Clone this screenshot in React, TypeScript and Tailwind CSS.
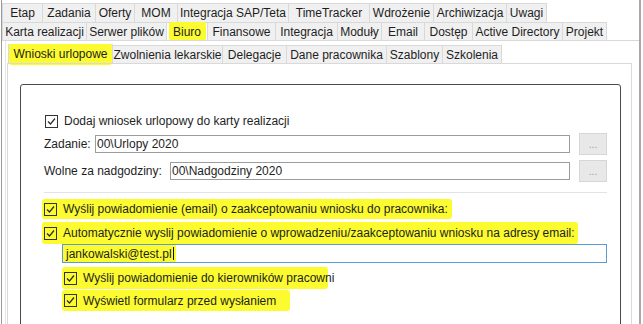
import React from "react";

const row1 = [
  { label: "Etap", w: "w-[41px]" },
  { label: "Zadania", w: "w-[53px]" },
  { label: "Oferty", w: "w-[39px]" },
  { label: "MOM", w: "w-[43px]" },
  { label: "Integracja SAP/Teta", w: "w-[111px]" },
  { label: "TimeTracker", w: "w-[81px]" },
  { label: "Wdrożenie", w: "w-[64px]" },
  { label: "Archiwizacja", w: "w-[73px]" },
  { label: "Uwagi", w: "w-[40px]" },
];

const row2 = [
  { label: "Karta realizacji", w: "w-[85px]" },
  { label: "Serwer plików", w: "w-[80px]" },
  { label: "Biuro", w: "w-[41px]", active: true },
  { label: "Finansowe", w: "w-[68px]" },
  { label: "Integracja", w: "w-[62px]" },
  { label: "Moduły", w: "w-[44px]" },
  { label: "Email", w: "w-[43px]" },
  { label: "Dostęp", w: "w-[48px]" },
  { label: "Active Directory", w: "w-[90px]" },
  { label: "Projekt", w: "w-[44px]" },
];

const subTabs = [
  { label: "Wnioski urlopowe", w: "w-[105px]", active: true },
  { label: "Zwolnienia lekarskie", w: "w-[110px]" },
  { label: "Delegacje", w: "w-[64px]" },
  { label: "Dane pracownika", w: "w-[100px]" },
  { label: "Szablony", w: "w-[56px]" },
  { label: "Szkolenia", w: "w-[59px]" },
];

function Check({ clear }: { clear?: boolean }) {
  return (
    <span
      className={`flex h-[13px] w-[13px] shrink-0 items-center justify-center border border-[#333] ${
        clear ? "bg-transparent" : "bg-white"
      }`}
    >
      <svg width="11" height="11" viewBox="0 0 11 11">
        <polyline points="2,5.5 4.5,8 9,2.5" fill="none" stroke="#2a2a2a" strokeWidth="1.2" />
      </svg>
    </span>
  );
}

function DotsButton() {
  return (
    <div className="flex h-[22px] w-[28px] items-end justify-center border border-[#d6d6d6] bg-[#e8e8e8] pb-[4px] text-[10px] leading-none text-[#9a9a9a]">
      ...
    </div>
  );
}

export default function App() {
  return (
    <div className="flex h-[324px] w-[643px] overflow-hidden whitespace-nowrap bg-white font-['Liberation_Sans',Arial,sans-serif] text-[12px] text-[#1e1e1e]">
      <div className="ml-[1px] flex h-full w-[640px] flex-col border-l border-r-2 border-l-[#9a9a9a] border-r-[#a8a8a8]">
        {/* main tab rows */}
        <div className="mt-[3px] flex h-[19px]">
          {row1.map((t, i) => (
            <div
              key={t.label}
              className={`${t.w} flex h-full items-center justify-center border-r border-t border-[#d9d9d9] bg-[#f0f0f0] ${
                i === 0 ? "border-l" : ""
              }`}
            >
              {t.label}
            </div>
          ))}
        </div>
        <div className="flex h-[18px]">
          {row2.map((t, i) => (
            <div
              key={t.label}
              className={`${t.w} flex h-full items-center justify-center border-r border-t border-[#d9d9d9] ${
                i === 0 ? "border-l" : ""
              } ${t.active ? "bg-white" : "bg-[#f0f0f0]"}`}
            >
              {t.active ? (
                <span className="flex h-[19px] w-[37px] items-center justify-center rounded-[2px] bg-[#fbfb30]">
                  {t.label}
                </span>
              ) : (
                t.label
              )}
            </div>
          ))}
        </div>

        {/* Biuro page */}
        <div className="flex flex-1 flex-col border-t border-[#d9d9d9] bg-white">
          <div className="ml-[3px] flex flex-1 flex-col border-l border-[#e6e6e6]">
            <div className="ml-[2px] mt-[3px] flex h-[19px] items-end">
              {subTabs.map((t, i) => (
                <div
                  key={t.label}
                  className={`${t.w} flex items-center justify-center border-r border-t border-[#d9d9d9] ${
                    i === 0 ? "border-l" : ""
                  } ${t.active ? "h-[19px] bg-white" : "h-[18px] bg-[#f0f0f0]"}`}
                >
                  {t.active ? (
                    <span className="flex h-[21px] w-[103px] items-center justify-center rounded-[3px] bg-[#fbfb30]">
                      {t.label}
                    </span>
                  ) : (
                    t.label
                  )}
                </div>
              ))}
            </div>

            {/* sub tab panel */}
            <div className="ml-[1px] flex w-[625px] flex-1 flex-col border border-[#d9d9d9]">
              <div className="ml-[12px] mt-[20px] flex h-[260px] w-[601px] flex-col rounded-[3px] border border-[#4a4a4a]">
                <div className="ml-[24px] mt-[28px] flex h-[16px] items-center gap-[6px]">
                  <Check />
                  <span>Dodaj wniosek urlopowy do karty realizacji</span>
                </div>

                <div className="ml-[23px] mt-[4px] flex h-[22px] items-center">
                  <span className="w-[51px]">Zadanie:</span>
                  <div className="flex h-[18px] w-[475px] items-center border border-[#9c9c9c] pl-[1px]">
                    00\Urlopy 2020
                  </div>
                  <div className="ml-[9px]">
                    <DotsButton />
                  </div>
                </div>

                <div className="ml-[23px] mt-[5px] flex h-[22px] items-center">
                  <span className="w-[126px]">Wolne za nadgodziny:</span>
                  <div className="flex h-[18px] w-[400px] items-center border border-[#9c9c9c] pl-[1px]">
                    00\Nadgodziny 2020
                  </div>
                  <div className="ml-[9px]">
                    <DotsButton />
                  </div>
                </div>

                <div className="ml-[23px] mt-[10px] h-px w-[563px] bg-[#e3e3e3]" />

                <div className="ml-[21px] mt-[6px] flex h-[20px] w-[410px] items-center gap-[6px] rounded-[3px] bg-[#fbfb30] pl-[2px]">
                  <Check clear />
                  <span>Wyślij powiadomienie (email) o zaakceptowaniu wniosku do pracownika:</span>
                </div>

                <div className="ml-[21px] mt-[3px] flex h-[22px] w-[536px] items-center gap-[6px] rounded-[3px] bg-[#fbfb30] pl-[2px]">
                  <Check clear />
                  <span>
                    Automatycznie wyslij powiadomienie o wprowadzeniu/zaakceptowaniu wniosku na adresy email:
                  </span>
                </div>

                <div className="ml-[41px] flex h-[19px] w-[545px] items-stretch border border-[#5b9bd5] bg-white">
                  <div className="flex w-[113px] items-center bg-[#fbfb30] pl-[3px]">
                    jankowalski@test.pl
                    <span className="ml-px h-[13px] w-px bg-[#111]" />
                  </div>
                </div>

                <div className="ml-[41px] mt-[4px] flex h-[22px] w-[266px] items-center gap-[6px] rounded-[3px] bg-[#fbfb30] pl-[2px]">
                  <Check clear />
                  <span>Wyślij powiadomienie do kierowników pracowni</span>
                </div>

                <div className="ml-[41px] mt-[1px] flex h-[21px] w-[228px] items-center gap-[6px] rounded-[3px] bg-[#fbfb30] pl-[2px]">
                  <Check clear />
                  <span>Wyświetl formularz przed wysłaniem</span>
                </div>
              </div>
            </div>
          </div>
        </div>
      </div>
    </div>
  );
}
